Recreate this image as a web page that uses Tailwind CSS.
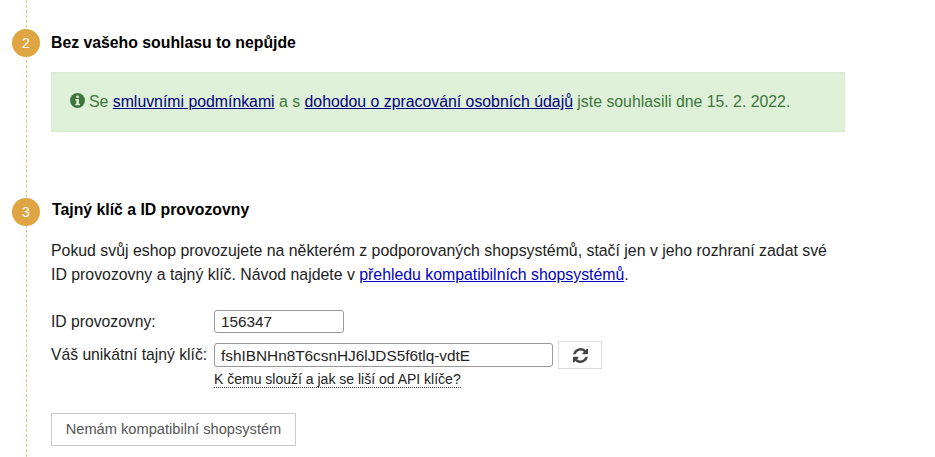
<!DOCTYPE html>
<html lang="cs">
<head>
<meta charset="utf-8">
<script src="https://cdn.jsdelivr.net/npm/@tailwindcss/browser@4"></script>
</head>
<body class="bg-white">
<div class="relative w-[935px] h-[457px] overflow-hidden font-['Liberation_Sans',Arial,sans-serif] text-[#222]">
  <div class="absolute left-[26px] top-0 bottom-0 border-l border-dashed border-[#dcc48c]"></div>
  <div class="pl-[12px] pt-[29px]">
    <section class="h-[169px]">
      <div class="flex items-center h-[28px]">
        <span class="relative flex items-center justify-center size-[28px] rounded-full bg-[#dfa542] text-white text-[14px]">2</span>
        <h2 class="ml-[11px] text-[15.8px] font-bold text-black">Bez vašeho souhlasu to nepůjde</h2>
      </div>
      <div class="ml-[39px] mt-[15px] w-[794px] h-[60px] bg-[#dff0d8] border border-[#d9ecd0] flex items-center pl-[18px] text-[15.83px] text-[#3c763d]">
        <svg class="size-[15px] mr-[4px] mb-[3px] shrink-0" viewBox="0 0 14 14"><circle cx="7" cy="7" r="7" fill="#3c763d"/><rect x="5.900" y="2.400" width="2.400" height="2.200" fill="#dff0d8"/><path d="M4.900 5.700h3.400v4.400h1v1.400H4.900v-1.400h1V7.100h-1z" fill="#dff0d8"/></svg>
        <p>Se <a class="underline text-[#000080]">smluvními podmínkami</a> a s <a class="underline text-[#000080]">dohodou o zpracování osobních údajů</a> jste souhlasili dne 15. 2. 2022.</p>
      </div>
    </section>
    <section>
      <div class="flex items-center h-[28px]">
        <span class="relative flex items-center justify-center size-[28px] rounded-full bg-[#dfa542] text-white text-[14px]">3</span>
        <h2 class="ml-[12px] mb-[5px] text-[15.8px] font-bold text-black">Tajný klíč a ID provozovny</h2>
      </div>
      <p class="ml-[39px] mt-[13px] w-[800px] text-[15.85px] leading-[24px]">Pokud svůj eshop provozujete na některém z podporovaných shopsystémů, stačí jen v jeho rozhraní zadat své<br>ID provozovny a tajný klíč. Návod najdete v <a class="underline text-[#0000c0]">přehledu kompatibilních shopsystémů</a>.</p>
      <div class="ml-[39px] mt-[23px] flex items-center h-[23px] text-[15.7px]">
        <label class="w-[163px]">ID provozovny:</label>
        <div class="w-[130px] h-[23px] border border-[#999] rounded-[3px] pl-[6px] leading-[22px] text-[15.3px]">156347</div>
      </div>
      <div class="ml-[39px] mt-[10px] flex items-center h-[24px] text-[15.7px]">
        <label class="w-[163px] mb-[1px]">Váš unikátní tajný klíč:</label>
        <div class="w-[339px] h-[24px] border border-[#999] rounded-[3px] pl-[6px] leading-[23px] text-[15.35px]">fshIBNHn8T6csnHJ6lJDS5f6tlq-vdtE</div>
        <button class="ml-[5px] w-[44px] h-[28px] border border-[#ddd] flex items-center justify-center text-[#444]">
          <svg class="size-[15px]" viewBox="0 0 1536 1536"><path fill="currentColor" d="M1511 928q0 5-1 7-64 268-268 434.5T764 1536q-146 0-282.5-55T238 1324l-129 129q-19 19-45 19t-45-19-19-45V960q0-26 19-45t45-19h448q26 0 45 19t19 45-19 45l-137 137q71 66 161 102t187 36q134 0 250-65t186-179q11-17 53-117 8-23 30-23h192q13 0 22.500 9.500t9.500 22.500zm25-800v448q0 26-19 45t-45 19h-448q-26 0-45-19t-19-45 19-45l138-138Q969 256 768 256q-134 0-250 65T332 500q-11 17-53 117-8 23-30 23H50q-13 0-22.500-9.500T18 608v-7q65-268 270-434.500T768 0q146 0 284 55.500T1297 212l130-129q19-19 45-19t45 19 19 45z"/></svg>
        </button>
      </div>
      <div class="ml-[202px] mt-[4px] text-[14px] leading-[16px]"><a class="border-b border-dotted border-[#333]">K čemu slouží a jak se liší od API klíče?</a></div>
      <button class="block ml-[39px] mt-[26px] w-[245px] h-[33px] border border-[#ccc] text-[14.65px] text-[#555]">Nemám kompatibilní shopsystém</button>
    </section>
  </div>
</div>
</body>
</html>
